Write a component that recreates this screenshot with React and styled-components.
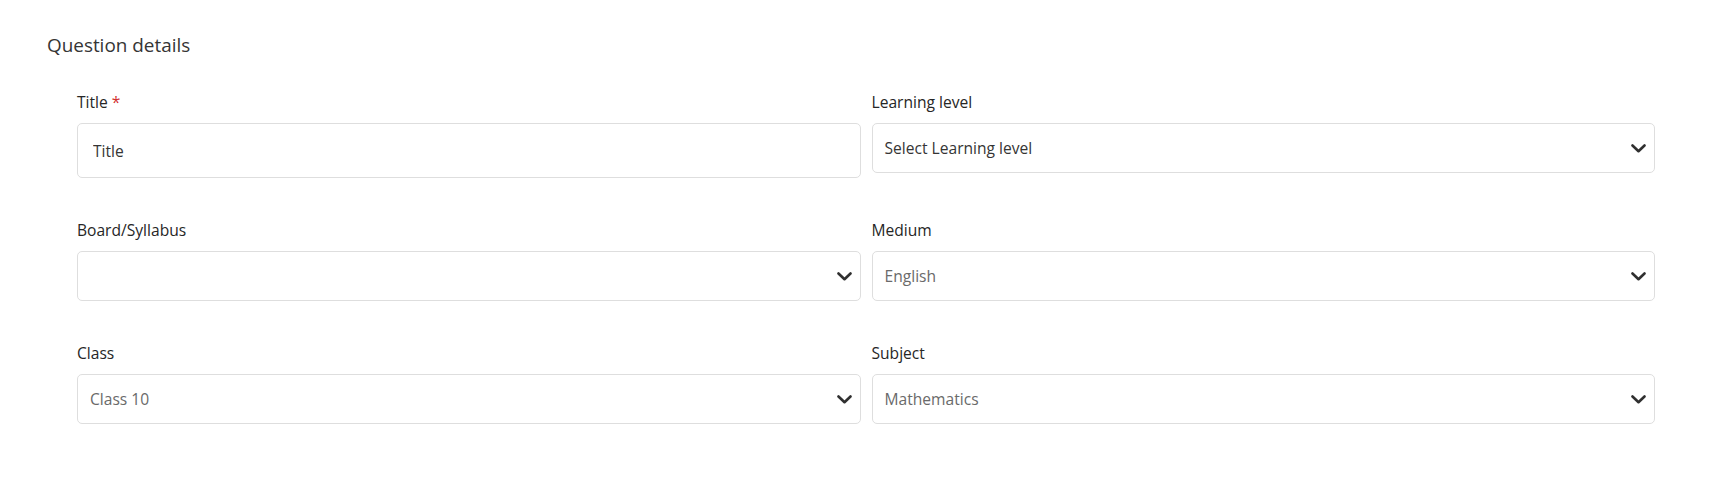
import React from "react";
import styled, { createGlobalStyle } from "styled-components";

const GlobalStyle = createGlobalStyle`
  html, body {
    margin: 0;
    padding: 0;
    background: #ffffff;
  }
  body {
    font-family: "Open Sans", "Noto Sans", "Liberation Sans", sans-serif;
    color: #333333;
  }
`;

const Section = styled.section`
  padding: 32px 69px 40px 47px;
`;

const Heading = styled.h2`
  margin: 0;
  font-size: 18.9px;
  line-height: 26px;
  font-weight: 400;
  color: #353535;
`;

const Grid = styled.div`
  display: grid;
  grid-template-columns: 1fr 1fr;
  column-gap: 11px;
  row-gap: 42px;
  margin-top: 34px;
  padding-left: 30px;
`;

const Field = styled.div`
  display: flex;
  flex-direction: column;
`;

const Label = styled.label`
  display: block;
  margin-bottom: 11px;
  font-size: 15.6px;
  line-height: 20px;
  font-weight: 500;
  color: #262626;
`;

const Required = styled.span`
  margin-left: 4px;
  color: #d2302f;
`;

const TextInput = styled.input`
  box-sizing: border-box;
  width: 100%;
  height: 55px;
  padding: 0 15px;
  border: 1px solid #dedede;
  border-radius: 5px;
  font-family: inherit;
  font-size: 15.6px;
  color: #333333;
  outline: none;

  &::placeholder {
    color: #353535;
  }
`;

const SelectBox = styled.div`
  box-sizing: border-box;
  display: flex;
  align-items: center;
  justify-content: space-between;
  height: 50px;
  padding: 0 8px 0 12px;
  border: 1px solid #dedede;
  border-radius: 5px;
  font-size: 15.6px;
  color: ${(props) => (props.muted ? "#6a6a6a" : "#353535")};
`;

const Chevron = styled.svg`
  width: 15px;
  height: 9px;
  flex-shrink: 0;
`;

const ChevronIcon = () => (
  <Chevron viewBox="0 0 15 9" fill="none">
    <polyline
      points="1.5,1.5 7.5,7.2 13.5,1.5"
      stroke="#303030"
      strokeWidth="2.6"
      strokeLinecap="round"
      strokeLinejoin="round"
    />
  </Chevron>
);

const Select = ({ value, muted }) => (
  <SelectBox muted={muted}>
    <span>{value}</span>
    <ChevronIcon />
  </SelectBox>
);

const selects = [
  { label: "Learning level", value: "Select Learning level" },
  { label: "Board/Syllabus", value: "" },
  { label: "Medium", value: "English", muted: true },
  { label: "Class", value: "Class 10", muted: true },
  { label: "Subject", value: "Mathematics", muted: true },
];

const App = () => (
  <>
    <GlobalStyle />
    <Section>
      <Heading>Question details</Heading>
      <Grid>
        <Field>
          <Label>
            Title<Required>*</Required>
          </Label>
          <TextInput placeholder="Title" />
        </Field>
        {selects.map((item) => (
          <Field key={item.label}>
            <Label>{item.label}</Label>
            <Select value={item.value} muted={item.muted} />
          </Field>
        ))}
      </Grid>
    </Section>
  </>
);

export default App;
